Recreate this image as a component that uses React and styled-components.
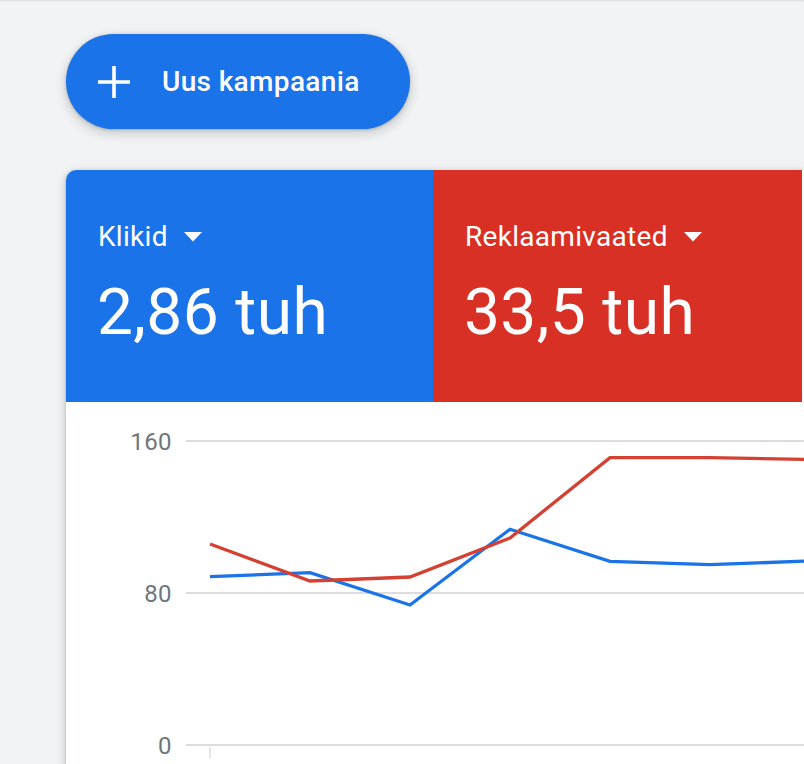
import React from "react";
import styled, { createGlobalStyle } from "styled-components";

// page base: grey surface, no scroll, Roboto everywhere
const GlobalStyle = createGlobalStyle`
  html, body {
    margin: 0;
    padding: 0;
    background: #f1f3f4;
    overflow: hidden;
    font-family: Roboto, "Liberation Sans", Arial, sans-serif;
  }
`;

const Page = styled.div`
  min-height: 764px;
  padding: 34px 0 0 66px;
  box-shadow: inset 0 2px 2px -1px rgba(60, 64, 67, 0.12);
  box-sizing: border-box;
`;

const CreateButton = styled.button`
  display: flex;
  align-items: center;
  gap: 32px;
  height: 95px;
  width: 344px;
  padding: 0 0 0 32px;
  border: none;
  border-radius: 48px;
  background: #1a73e8;
  color: #fff;
  font-family: Roboto, "Liberation Sans", Arial, sans-serif;
  font-size: 28px;
  font-weight: 500;
  letter-spacing: 0.35px;
  cursor: pointer;
  box-shadow: 0 1px 3px rgba(60, 64, 67, 0.3),
    0 4px 8px 3px rgba(60, 64, 67, 0.15);
`;

const Card = styled.div`
  margin-top: 41px;
  width: 900px;
  background: #fff;
  border-radius: 10px 10px 0 0;
  overflow: hidden;
  box-shadow: 0 1px 3px rgba(60, 64, 67, 0.3),
    0 4px 8px 3px rgba(60, 64, 67, 0.15);
`;

const TileRow = styled.div`
  display: flex;
`;

const Tile = styled.div`
  width: ${(p) => p.$width}px;
  flex-shrink: 0;
  background: ${(p) => p.$color};
  color: #fff;
  padding: 51px 0 52px 32px;
  box-sizing: border-box;
  height: 232px;
`;

const TileLabel = styled.div`
  display: flex;
  align-items: center;
  gap: 16px;
  font-size: 28px;
  line-height: 32px;
  letter-spacing: 0.3px;
`;

const TileValue = styled.div`
  margin-top: 24px;
  margin-left: -1px;
  font-size: 64px;
  line-height: 72px;
  letter-spacing: 0.4px;
`;

const ChartBox = styled.div`
  height: 362px;
  svg {
    display: block;
  }
`;

const PlusIcon = () => (
  <svg width="32" height="32" viewBox="0 0 32 32">
    <path d="M16 0v32M0 16h32" stroke="#fff" strokeWidth="3.6" fill="none" />
  </svg>
);

const Caret = () => (
  <svg width="18" height="10" viewBox="0 0 18 10">
    <path d="M0 0h18L9 9.5z" fill="#fff" />
  </svg>
);

const xs = [144, 244, 344, 444, 544, 644, 744, 844];
const blue = [174.7, 170.7, 203, 127.3, 159.3, 162.7, 159, 158];
const red = [142, 179, 175, 136, 55.7, 55.7, 57.5, 58];
const grid = [
  { y: 39, label: "160", base: 48 },
  { y: 191, label: "80", base: 200 },
  { y: 343, label: "0", base: 352 },
];

const pts = (ys) => ys.map((y, i) => `${xs[i]},${y}`).join(" ");

const Chart = () => (
  <svg width="900" height="362" viewBox="0 0 900 362">
    {grid.map((g) => (
      <g key={g.label}>
        <line x1="120" x2="900" y1={g.y} y2={g.y} stroke="#dadce0" strokeWidth="2" />
        <text
          x="106"
          y={g.base}
          textAnchor="end"
          fontFamily="Roboto, 'Liberation Sans', Arial, sans-serif"
          fontSize="24"
          letterSpacing="0.4"
          fill="#70757a"
        >
          {g.label}
        </text>
      </g>
    ))}
    <line x1="144" x2="144" y1="345" y2="356" stroke="#dadce0" strokeWidth="1.5" />
    <polyline points={pts(blue)} fill="none" stroke="#1a73e8" strokeWidth="3.3" strokeLinejoin="miter" />
    <polyline points={pts(red)} fill="none" stroke="#d44032" strokeWidth="3.3" strokeLinejoin="miter" />
  </svg>
);

const tiles = [
  { label: "Klikid", value: "2,86 tuh", color: "#1a73e8", width: 367 },
  { label: "Reklaamivaated", value: "33,5 tuh", color: "#d93025", width: 369 },
  { label: "", value: "", color: "#ffffff", width: 164 },
];

export default function App() {
  return (
    <>
      <GlobalStyle />
      <Page>
        <CreateButton type="button">
          <PlusIcon />
          <span>Uus kampaania</span>
        </CreateButton>
        <Card>
          <TileRow>
            {tiles.map((t, i) => (
              <Tile key={i} $color={t.color} $width={t.width}>
                {t.label && (
                  <>
                    <TileLabel>
                      {t.label}
                      <Caret />
                    </TileLabel>
                    <TileValue>{t.value}</TileValue>
                  </>
                )}
              </Tile>
            ))}
          </TileRow>
          <ChartBox>
            <Chart />
          </ChartBox>
        </Card>
      </Page>
    </>
  );
}
